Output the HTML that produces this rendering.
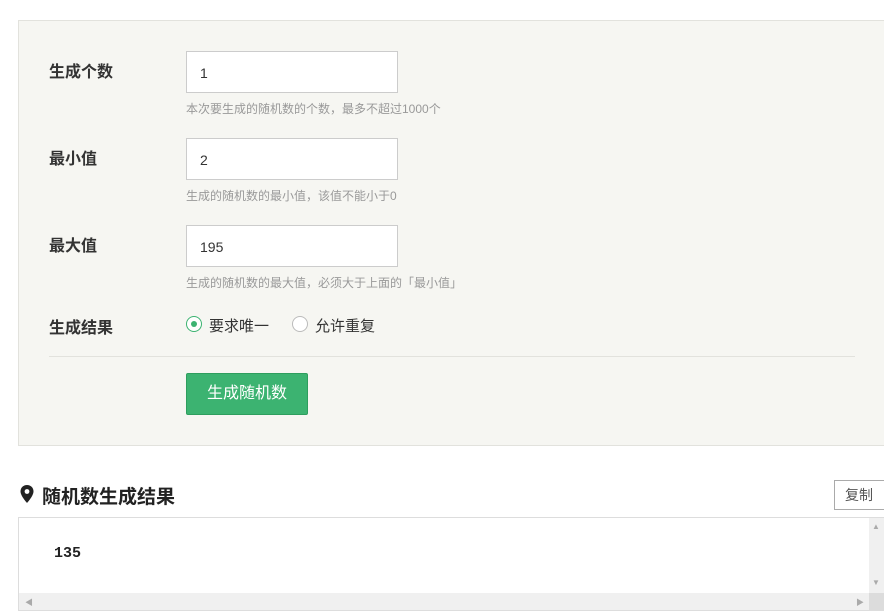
<!DOCTYPE html><html><head><meta charset="utf-8"><style>
body{margin:0;width:884px;height:616px;overflow:hidden;background:#fff;font-family:"Liberation Sans","Noto Sans CJK SC",sans-serif;position:relative}
.panel{position:absolute;left:18px;top:20px;width:880px;height:424px;background:#f6f6f2;border:1px solid #e2e2dd}
.lbl{position:absolute;left:49px;font-size:16px;font-weight:bold;color:#333}
.inp{position:absolute;left:186px;border:1px solid #ccc;background:#fff;font-size:14px;line-height:42px;padding-left:13px;box-sizing:border-box;width:212px;height:42px;color:#333}
.hint{position:absolute;left:186px;font-size:12px;color:#999}
.radio{position:absolute;top:316px;width:16px;height:16px;border:1px solid #bbb;border-radius:50%;background:#fff;box-sizing:border-box}
.rt{position:absolute;top:315px;font-size:15px;color:#333}
</style></head><body>
<div class="panel"></div>
<div class="lbl" style="top:58px">生成个数</div>
<div class="inp" style="top:51px">1</div>
<div class="hint" style="top:100px">本次要生成的随机数的个数，最多不超过1000个</div>
<div class="lbl" style="top:145px">最小值</div>
<div class="inp" style="top:138px">2</div>
<div class="hint" style="top:187px">生成的随机数的最小值，该值不能小于0</div>
<div class="lbl" style="top:232px">最大值</div>
<div class="inp" style="top:225px">195</div>
<div class="hint" style="top:274px">生成的随机数的最大值，必须大于上面的「最小值」</div>
<div class="lbl" style="top:314px">生成结果</div>
<div class="radio" style="left:186px;border-color:#3cb371"><div style="position:absolute;left:4px;top:4px;width:6px;height:6px;border-radius:50%;background:#3cb371"></div></div>
<div class="rt" style="left:209px">要求唯一</div>
<div class="radio" style="left:292px"></div>
<div class="rt" style="left:315px">允许重复</div>
<div style="position:absolute;left:49px;top:356px;width:806px;height:1px;background:#e2e2dd"></div>
<div style="position:absolute;left:186px;top:373px;width:122px;height:42px;background:#3cb371;border:1px solid #2e9e5e;box-sizing:border-box;color:#fff;font-size:16px;text-align:center;line-height:40px;border-radius:2px">生成随机数</div>
<svg style="position:absolute;left:20px;top:485px" width="14" height="18" viewBox="0 0 14 18"><path d="M7 0C3.2 0 0.5 2.8 0.5 6.4 0.5 11 7 18 7 18S13.5 11 13.5 6.4C13.5 2.8 10.8 0 7 0Z" fill="#222"/><circle cx="7" cy="6.5" r="2.4" fill="#fff"/></svg>
<div style="position:absolute;left:42px;top:482px;font-size:19px;font-weight:bold;color:#222">随机数生成结果</div>
<div style="position:absolute;left:834px;top:480px;width:60px;height:30px;border:1px solid #aaa;box-sizing:border-box;font-size:14px;color:#555;line-height:28px;padding-left:10px;background:#fff">复制</div>
<div style="position:absolute;left:18px;top:517px;width:870px;height:94px;border:1px solid #ddd;box-sizing:border-box;background:#fff"></div>
<div style="position:absolute;left:54px;top:545px;font-family:'Liberation Mono',monospace;font-weight:bold;font-size:15px;color:#222">135</div>
<div style="position:absolute;left:869px;top:518px;width:15px;height:75px;background:#f0f0f0"></div>
<div style="position:absolute;left:19px;top:593px;width:850px;height:17px;background:#f0f0f0"></div>
<div style="position:absolute;left:869px;top:593px;width:15px;height:17px;background:#dcdcdc"></div>
<div style="position:absolute;left:25px;top:597px;font-size:8px;color:#aaa">◀</div>
<div style="position:absolute;left:856px;top:597px;font-size:8px;color:#aaa">▶</div>
<div style="position:absolute;left:872px;top:522px;font-size:8px;color:#aaa">▲</div>
<div style="position:absolute;left:872px;top:578px;font-size:8px;color:#aaa">▼</div>
</body></html>
